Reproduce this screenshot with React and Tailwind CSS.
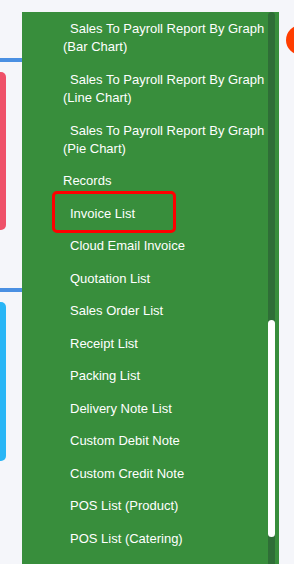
export default function App() {
  // report links that wrap onto two lines
  const charts = ["Bar Chart", "Line Chart", "Pie Chart"];

  const records = [
    "Invoice List",
    "Cloud Email Invoice",
    "Quotation List",
    "Sales Order List",
    "Receipt List",
    "Packing List",
    "Delivery Note List",
    "Custom Debit Note",
    "Custom Credit Note",
    "POS List (Product)",
    "POS List (Catering)",
  ];

  return (
    <div className="w-[294px] h-[564px] overflow-hidden bg-[#f5f6fa] flex font-['Liberation_Sans',Arial,sans-serif] text-[13px] text-white">
      {/* cards peeking out behind the menu */}
      <div className="w-[22px] shrink-0 flex flex-col pt-[58px]">
        <div className="h-[4px] bg-[#4a90e2]" />
        <div className="mt-[10px] w-[6px] h-[158px] rounded-r-[5px] bg-[#ef5169]" />
        <div className="mt-[58px] h-[4px] bg-[#4a90e2]" />
        <div className="mt-[10px] w-[6px] h-[159px] rounded-r-[5px] bg-[#29b6f6]" />
      </div>

      {/* dropdown menu */}
      <div className="mt-[12px] w-[257px] shrink-0 bg-[#388e3c] flex">
        <div className="flex-1 min-w-0">
          {charts.map((c) => (
            <div key={c} className="py-[7.5px] pl-[41px] pr-[2px] indent-[7px] leading-[18px]">
              Sales To Payroll Report By Graph ({c})
            </div>
          ))}
          <div className="py-[7.25px] pl-[41px] leading-[18px]">Records</div>
          {records.map((r, i) => (
            <div key={r} className="relative py-[7.25px] pl-[48px] leading-[18px]">
              {r}
              {i === 0 && (
                <div className="absolute left-[30px] top-[-6.5px] w-[124px] h-[42px] border-[3px] border-[#ff0000] rounded-[5px]" />
              )}
            </div>
          ))}
        </div>
        {/* scrollbar */}
        <div className="w-[7px] mr-[4px] bg-[#2f6e37] rounded-t-full pt-[308px]">
          <div className="h-[217px] bg-white rounded-full" />
        </div>
      </div>

      <div className="pl-[7px] pt-[25px]">
        <div className="w-[30px] h-[30px] rounded-full bg-[#ff3d00]" />
      </div>
    </div>
  );
}
